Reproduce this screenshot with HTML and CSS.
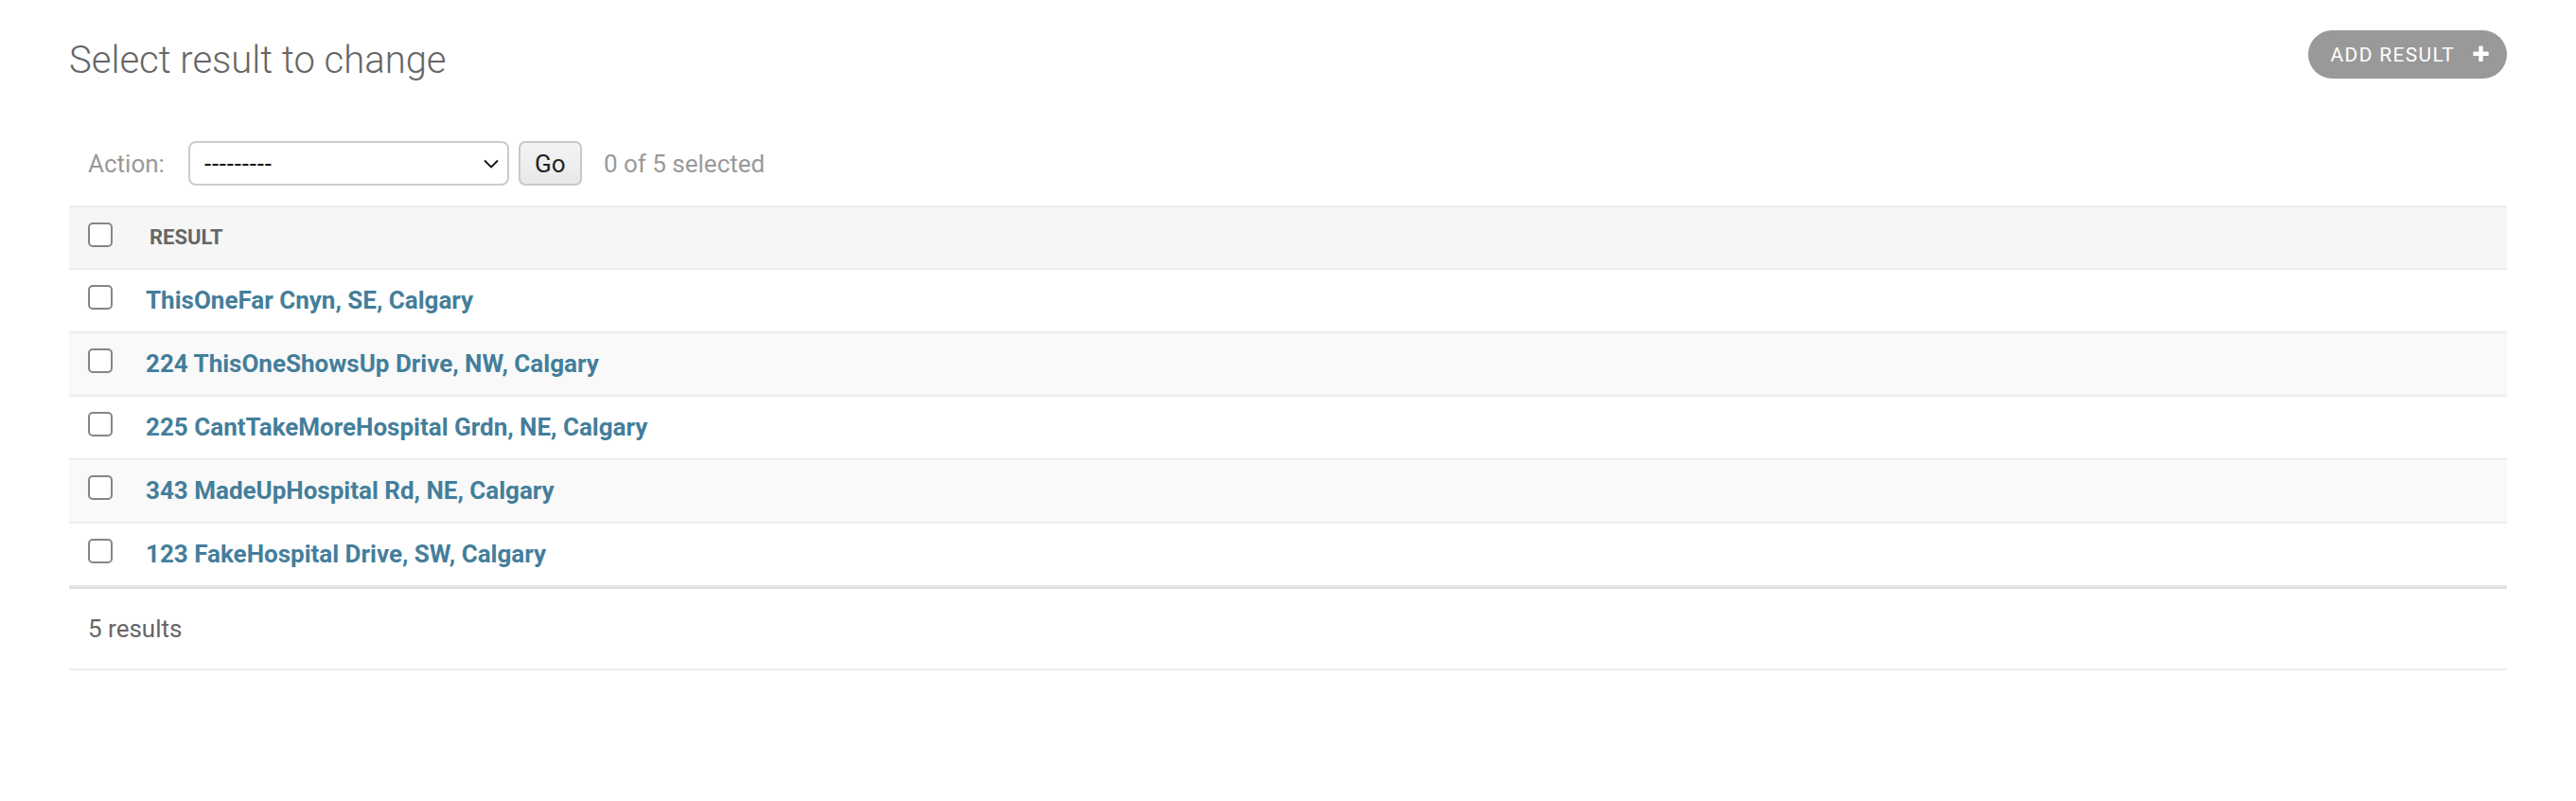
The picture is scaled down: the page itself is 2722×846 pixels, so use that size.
FILE: index.html
```html
<!DOCTYPE html>
<html lang="en">
<head>
<meta charset="utf-8">
<title>Select result to change</title>
<link rel="stylesheet" href="styles.css">
</head>
<body>
<div class="content">
  <div class="head">
    <h1 class="title">Select result to change</h1>
    <a class="addlink" href="#">ADD RESULT
      <svg class="plus" viewBox="0 0 1792 1792" width="21" height="21" aria-hidden="true"><path fill="#fff" d="M1600 736v192q0 40-28 68t-68 28h-416v416q0 40-28 68t-68 28h-192q-40 0-68-28t-28-68v-416h-416q-40 0-68-28t-28-68v-192q0-40 28-68t68-28h416v-416q0-40 28-68t68-28h192q40 0 68 28t28 68v416h416q40 0 68 28t28 68z"/></svg>
    </a>
  </div>
  <div class="actions">
    <span class="label">Action:</span>
    <div class="select">
      <span class="select-text">---------</span>
      <svg class="chev" viewBox="0 0 16 10" width="16" height="10" aria-hidden="true"><path d="M1 1.5 L8 8.5 L15 1.5" fill="none" stroke="#111" stroke-width="1.8"/></svg>
    </div>
    <button class="go" type="button">Go</button>
    <span class="counter">0 of 5 selected</span>
  </div>
  <table class="results">
    <thead>
      <tr>
        <th class="cb"><span class="box"></span></th>
        <th class="col">RESULT</th>
      </tr>
    </thead>
    <tbody>
      <tr class="row1"><td class="cb"><span class="box"></span></td><td class="col"><a href="#">ThisOneFar Cnyn, SE, Calgary</a></td></tr>
      <tr class="row2"><td class="cb"><span class="box"></span></td><td class="col"><a href="#">224 ThisOneShowsUp Drive, NW, Calgary</a></td></tr>
      <tr class="row1"><td class="cb"><span class="box"></span></td><td class="col"><a href="#">225 CantTakeMoreHospital Grdn, NE, Calgary</a></td></tr>
      <tr class="row2"><td class="cb"><span class="box"></span></td><td class="col"><a href="#">343 MadeUpHospital Rd, NE, Calgary</a></td></tr>
      <tr class="row1 last"><td class="cb"><span class="box"></span></td><td class="col"><a href="#">123 FakeHospital Drive, SW, Calgary</a></td></tr>
    </tbody>
  </table>
  <p class="paginator">5 results</p>
</div>
</body>
</html>
```
FILE: styles.css
```css
html, body {
  margin: 0;
  padding: 0;
  background: #fff;
}
body {
  font-family: Roboto, "Liberation Sans", sans-serif;
  color: #333;
}
.content {
  padding: 32px 73px 0;
}
.head {
  display: flex;
  justify-content: space-between;
  align-items: flex-start;
}
.title {
  margin: 8px 0 0;
  font-size: 40px;
  line-height: 48px;
  font-weight: 300;
  color: #666;
}
.addlink {
  display: flex;
  align-items: center;
  height: 51px;
  box-sizing: border-box;
  padding: 0 17px 0 24px;
  background: #999;
  color: #fff;
  text-decoration: none;
  font-size: 21px;
  letter-spacing: 1.3px;
  border-radius: 26px;
}
.plus {
  margin-left: 17px;
  display: block;
}
.actions {
  margin-top: 41px;
  padding: 20px 20px 21px;
  display: flex;
  align-items: center;
  font-size: 26px;
  color: #999;
}
.label {
  margin-right: 25px;
}
.select {
  width: 339px;
  height: 47px;
  box-sizing: border-box;
  border: 2px solid #ccc;
  border-radius: 8px;
  display: flex;
  align-items: center;
  justify-content: space-between;
  padding: 0 9px 0 15px;
  color: #111;
  font-size: 26px;
}
.select-text {
  letter-spacing: 0.8px;
}
.chev {
  display: block;
}
.go {
  margin-left: 10px;
  width: 67px;
  height: 47px;
  box-sizing: border-box;
  border: 2px solid #c8c8c8;
  border-radius: 7px;
  background: linear-gradient(#f4f4f4, #e8e8e8);
  font-family: Roboto, "Liberation Sans", sans-serif;
  font-size: 26px;
  color: #222;
  padding: 0;
}
.counter {
  margin-left: 23px;
}
.results {
  width: 100%;
  border-collapse: separate;
  border-spacing: 0;
}
.results th, .results td {
  text-align: left;
  vertical-align: top;
  padding: 16px 0;
  border-bottom: 2px solid #ededed;
}
.results thead th {
  background: #f6f6f6;
  border-top: 2px solid #ededed;
  line-height: 32px;
  font-size: 22px;
  font-weight: 700;
  color: #666;
}
.results td {
  line-height: 33px;
  font-size: 26px;
}
.results .cb {
  width: 26px;
  padding-left: 20px;
  padding-right: 17px;
}
.results thead .col {
  padding-left: 22px;
}
.results td.col {
  padding-left: 18px;
}
.row2 td {
  background: #f9f9f9;
}
.results tr.last td {
  border-bottom: 2px solid #e8e8e8;
}
.box {
  display: block;
  width: 26px;
  height: 26px;
  box-sizing: border-box;
  border: 2px solid #858585;
  border-radius: 5px;
  background: #fff;
}
.results a {
  color: #447e9b;
  font-weight: 700;
  text-decoration: none;
}
.paginator {
  margin: 0;
  padding: 0 20px;
  line-height: 84px;
  font-size: 26px;
  color: #666;
  border-top: 2px solid #dcdcdc;
  border-bottom: 2px solid #ededed;
}
```
